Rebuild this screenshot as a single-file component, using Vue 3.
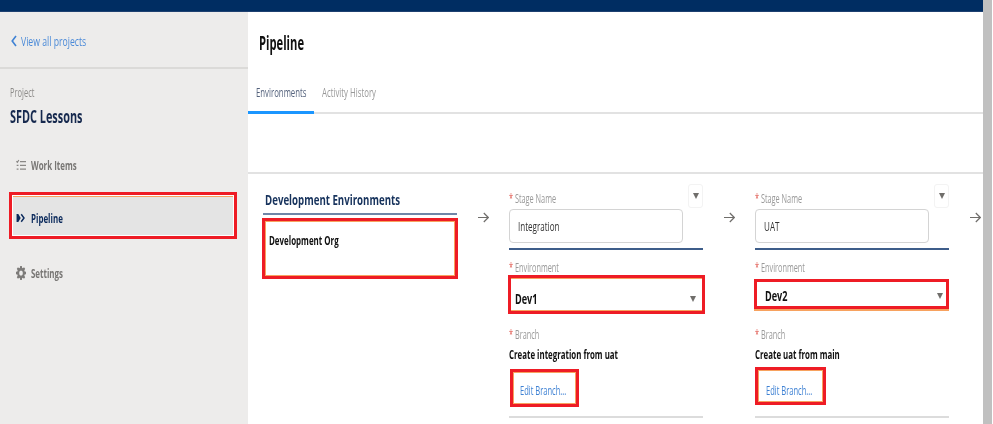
<script setup>
const stages = [
  { name: 'Integration', env: 'Dev1', branch: 'Create integration from uat', envClass: 'env-a', editClass: 'edit-a' },
  { name: 'UAT', env: 'Dev2', branch: 'Create uat from main', envClass: 'env-b', editClass: 'edit-b' }
]
</script>

<template>
  <div class="page">
    <div class="frame">
      <header class="topbar"></header>
      <div class="body">
        <aside class="sidebar">
          <a class="back">
            <svg class="chev" width="6" height="12" viewBox="0 0 6 12"><path d="M5 1 1.200 6 5 11" fill="none" stroke="#3f82d4" stroke-width="1.600"/></svg>
            <span class="sq link-text">View all projects</span>
          </a>
          <div class="project">
            <div class="project-label"><span class="sq">Project</span></div>
            <div class="project-name"><span class="sq">SFDC Lessons</span></div>
          </div>
          <nav class="nav">
            <div class="nav-item work">
              <span class="slot">
                <svg width="10" height="14" viewBox="0 0 12 14" fill="none" stroke="#8a8886" stroke-width="1.400">
                  <path d="M.5 2.500 1.700 3.800 3.400 1M4.800 3H12M.8 7.500h2.200M4.800 7.500H12M.8 12h2.200M4.800 12H12"/>
                </svg>
              </span>
              <span class="sq nav-text">Work Items</span>
            </div>
            <div class="nav-item active">
              <span class="slot">
                <svg width="9" height="10" viewBox="0 0 10 10">
                  <path d="M.6 .5H2.600L5.200 5 2.600 9.500H.6Z" fill="#0b2a5c"/>
                  <path d="M5.800 .8 8.900 5 5.800 9.200" fill="none" stroke="#0b2a5c" stroke-width="1.600"/>
                </svg>
              </span>
              <span class="sq nav-text">Pipeline</span>
            </div>
            <div class="nav-item settings">
              <span class="slot">
                <svg width="10" height="14" viewBox="0 0 24 24" preserveAspectRatio="none" fill="#7d7b79">
                  <path fill-rule="evenodd" d="M10 0h4l.6 3.200 1.900.8L19.200 2 22 4.800l-2 2.700.8 1.900L24 10v4l-3.200.6-.8 1.900 2 2.700-2.800 2.800-2.700-2-1.900.8L14 24h-4l-.6-3.200-1.900-.8-2.700 2L2 19.200l2-2.700-.8-1.900L0 14v-4l3.200-.6.8-1.900-2-2.700L4.800 2l2.700 2 1.900-.8L10 0Zm2 7.500a4.500 4.500 0 1 0 0 9 4.500 4.500 0 0 0 0-9Z"/>
                </svg>
              </span>
              <span class="sq nav-text">Settings</span>
            </div>
          </nav>
        </aside>
        <main class="main">
          <h1 class="title"><span class="sq">Pipeline</span></h1>
          <div class="tabs">
            <div class="tab current"><span class="sq">Environments</span></div>
            <div class="tab second"><span class="sq">Activity History</span></div>
          </div>
          <div class="spacer"></div>
          <section class="pipeline">
            <div class="dev">
              <h2 class="dev-title"><span class="sq">Development Environments</span></h2>
              <div class="dev-card"><span class="sq">Development Org</span></div>
            </div>
            <div class="arrow">
              <svg width="11" height="11" viewBox="0 0 11 11" fill="none" stroke="#706e6b" stroke-width="1.200"><path d="M0 5.500h10M5.800 1 10.300 5.500 5.800 10"/></svg>
            </div>
            <template v-for="s in stages" :key="s.name">
              <div class="stage">
                <button class="menu"><span class="tri"></span></button>
                <label class="field-label"><span class="sq"><i>*</i> Stage Name</span></label>
                <div class="input"><span class="sq">{{ s.name }}</span></div>
                <div class="rule"></div>
                <label class="field-label env-label"><span class="sq"><i>*</i> Environment</span></label>
                <div class="select" :class="s.envClass">
                  <span class="sq">{{ s.env }}</span>
                  <span class="tri"></span>
                </div>
                <label class="field-label branch-label"><span class="sq"><i>*</i> Branch</span></label>
                <div class="branch"><span class="sq">{{ s.branch }}</span></div>
                <button class="edit" :class="s.editClass"><span class="sq">Edit Branch...</span></button>
                <div class="end-rule"></div>
              </div>
              <div class="arrow">
                <svg width="11" height="11" viewBox="0 0 11 11" fill="none" stroke="#706e6b" stroke-width="1.200"><path d="M0 5.500h10M5.800 1 10.300 5.500 5.800 10"/></svg>
              </div>
            </template>
          </section>
        </main>
      </div>
    </div>
    <div class="scrollbar"></div>
  </div>
</template>

<style>
html, body { margin: 0; padding: 0; background: #fff; }
</style>

<style scoped>
.page {
  width: 993px;
  height: 424px;
  overflow: hidden;
  font-family: "Open Sans", "Liberation Sans", sans-serif;
  display: flex;
}
.frame { width: 983px; flex: none; display: flex; flex-direction: column; overflow: hidden; }
.scrollbar { width: 9px; flex: none; background: #c0c0c0; }
.sq {
  display: inline-block;
  transform: scaleX(var(--sx, .62));
  transform-origin: left center;
  white-space: nowrap;
  filter: blur(.25px);
}
.topbar { height: 11px; background: #002d62; border-bottom: 1px solid #1e4070; flex: none; }
.body { flex: 1; display: flex; min-height: 0; }
.sidebar { width: 248px; flex: none; background: #edeceb; }
.back {
  height: 57px;
  box-sizing: border-box;
  padding: 3px 0 0 11px;
  display: flex;
  align-items: center;
  gap: 4px;
  border-bottom: 2px solid #dbdad8;
}
.link-text { color: #4b8ad8; font-size: 13px; width: 72px; --sx: .667; }
.project { padding: 15px 0 0 10px; }
.project-label { color: #8d8b89; font-size: 12px; line-height: 17px; --sx: .625; }
.project-name { color: #16294e; font-size: 17px; font-weight: 700; line-height: 22px; margin-top: 5px; --sx: .64; }
.nav { margin-top: 21px; display: flex; flex-direction: column; }
.nav-item {
  height: 32px;
  display: flex;
  align-items: center;
  padding-left: 16px;
  box-sizing: border-box;
}
.slot { width: 15px; flex: none; display: flex; align-items: center; }
.nav-text { color: #787674; font-size: 13px; font-weight: 700; --sx: .61; }
.active {
  height: 47px;
  width: 228px;
  margin: 11px 0 0 9px;
  padding: 4px 0 0 4px;
  background: #e4e4e4;
  border: 3px solid #ee1c25;
  box-shadow: inset 0 0 0 1px #fff, inset 0 1px 0 1px #f7a25f;
}
.active .nav-text { color: #0b2a5c; }
.settings { margin-top: 18px; }
.main { flex: 1; min-width: 0; background: #fff; }
.title { margin: 0; padding: 19px 0 0 11px; height: 56px; box-sizing: border-box; font-size: 19px; font-weight: 700; line-height: 24px; color: #111; --sx: .59; }
.tabs {
  height: 46px;
  box-sizing: border-box;
  border-bottom: 2px solid #e2e2e2;
  display: flex;
  font-size: 13px;
  --sx: .6;
}
.tab { height: 46px; box-sizing: border-box; padding: 16px 0 0 8px; color: #999; line-height: 17px; }
.tab.current { color: #54627c; border-bottom: 3px solid #1b96ff; width: 66px; }
.tab.second { width: 90px; }
.spacer { height: 60px; border-bottom: 2px solid #e2e2e2; box-sizing: border-box; }
.pipeline { display: flex; align-items: flex-start; padding-left: 15px; }
.dev { width: 194px; flex: none; padding-top: 15px; }
.dev-title {
  margin: 0;
  padding-left: 2px;
  font-size: 15px;
  font-weight: 700;
  line-height: 20px;
  color: #16325c;
  height: 24px;
  border-bottom: 2px solid #6f86a8;
  --sx: .645;
}
.dev-card {
  margin: 3px 0 0 -1px;
  height: 61px;
  width: 196px;
  box-sizing: border-box;
  border: 3px solid #ee1c25;
  box-shadow: inset 0 0 0 1px #f7a25f;
  padding: 11px 0 0 4px;
  font-size: 13px;
  font-weight: 700;
  line-height: 17px;
  color: #111;
  --sx: .61;
}
.arrow { width: 52px; flex: none; padding-top: 38px; box-sizing: border-box; text-align: center; line-height: 0; }
.stage { width: 194px; flex: none; position: relative; padding-top: 17px; }
.menu {
  position: absolute;
  top: 10px;
  right: 0;
  width: 15px;
  height: 24px;
  background: #fff;
  border: 1px solid #f3f3f3;
  border-radius: 3px;
  display: flex;
  justify-content: center;
  padding: 8px 0 0;
  box-sizing: border-box;
}
.tri { display: block; width: 0; height: 0; border-left: 3.500px solid transparent; border-right: 3.500px solid transparent; border-top: 6px solid #706e6b; }
.field-label { display: block; font-size: 12px; line-height: 16px; color: #999; --sx: .61; }
.field-label i { font-style: normal; color: #e0584f; }
.input {
  width: 174px;
  height: 34px;
  box-sizing: border-box;
  margin-top: 2px;
  border: 1px solid #d4d4d4;
  border-radius: 4px;
  padding-left: 8px;
  line-height: 32px;
  font-size: 13px;
  color: #333;
  --sx: .62;
}
.rule { height: 2px; background: #3e5d8a; margin-top: 5px; }
.env-label { margin-top: 10px; }
.select {
  box-sizing: border-box;
  width: 197px;
  margin-left: -1px;
  border: 3px solid #ee1c25;
  display: flex;
  align-items: center;
  justify-content: space-between;
  padding: 0 6px 0 4px;
  font-size: 14px;
  font-weight: 700;
  color: #111;
  --sx: .65;
}
.env-a {
  height: 39px;
  margin-top: -1px;
  padding-top: 8px;
  box-shadow: inset 0 1px 0 #f7a25f, inset 0 -1px 0 #f7a25f;
}
.env-b {
  width: 195px;
  height: 30px;
  margin-top: 3px;
  padding: 3px 3px 0 8px;
  box-shadow: 0 2px 0 #f7a25f;
}
.branch-label { margin-top: 13px; }
.env-b + .branch-label { margin-top: 18px; }
.branch { font-size: 13px; font-weight: 700; line-height: 17px; color: #111; margin-top: 3px; --sx: .605; }
.edit {
  display: block;
  height: 38px;
  box-sizing: border-box;
  background: #fff;
  border: 3px solid #ee1c25;
  box-shadow: inset 0 0 0 1px #f7a25f;
  text-align: left;
  font-family: inherit;
  font-size: 13px;
  color: #3f82d4;
  --sx: .58;
}
.edit-a { width: 69px; margin: 6px 0 0 1px; padding: 4px 0 0 7px; }
.edit-b { width: 71px; margin: 4px 0 0; padding: 8px 0 0 8px; }
.end-rule { height: 2px; background: #dcdcdc; margin-top: 9px; }
.edit-b + .end-rule { margin-top: 11px; }
</style>
